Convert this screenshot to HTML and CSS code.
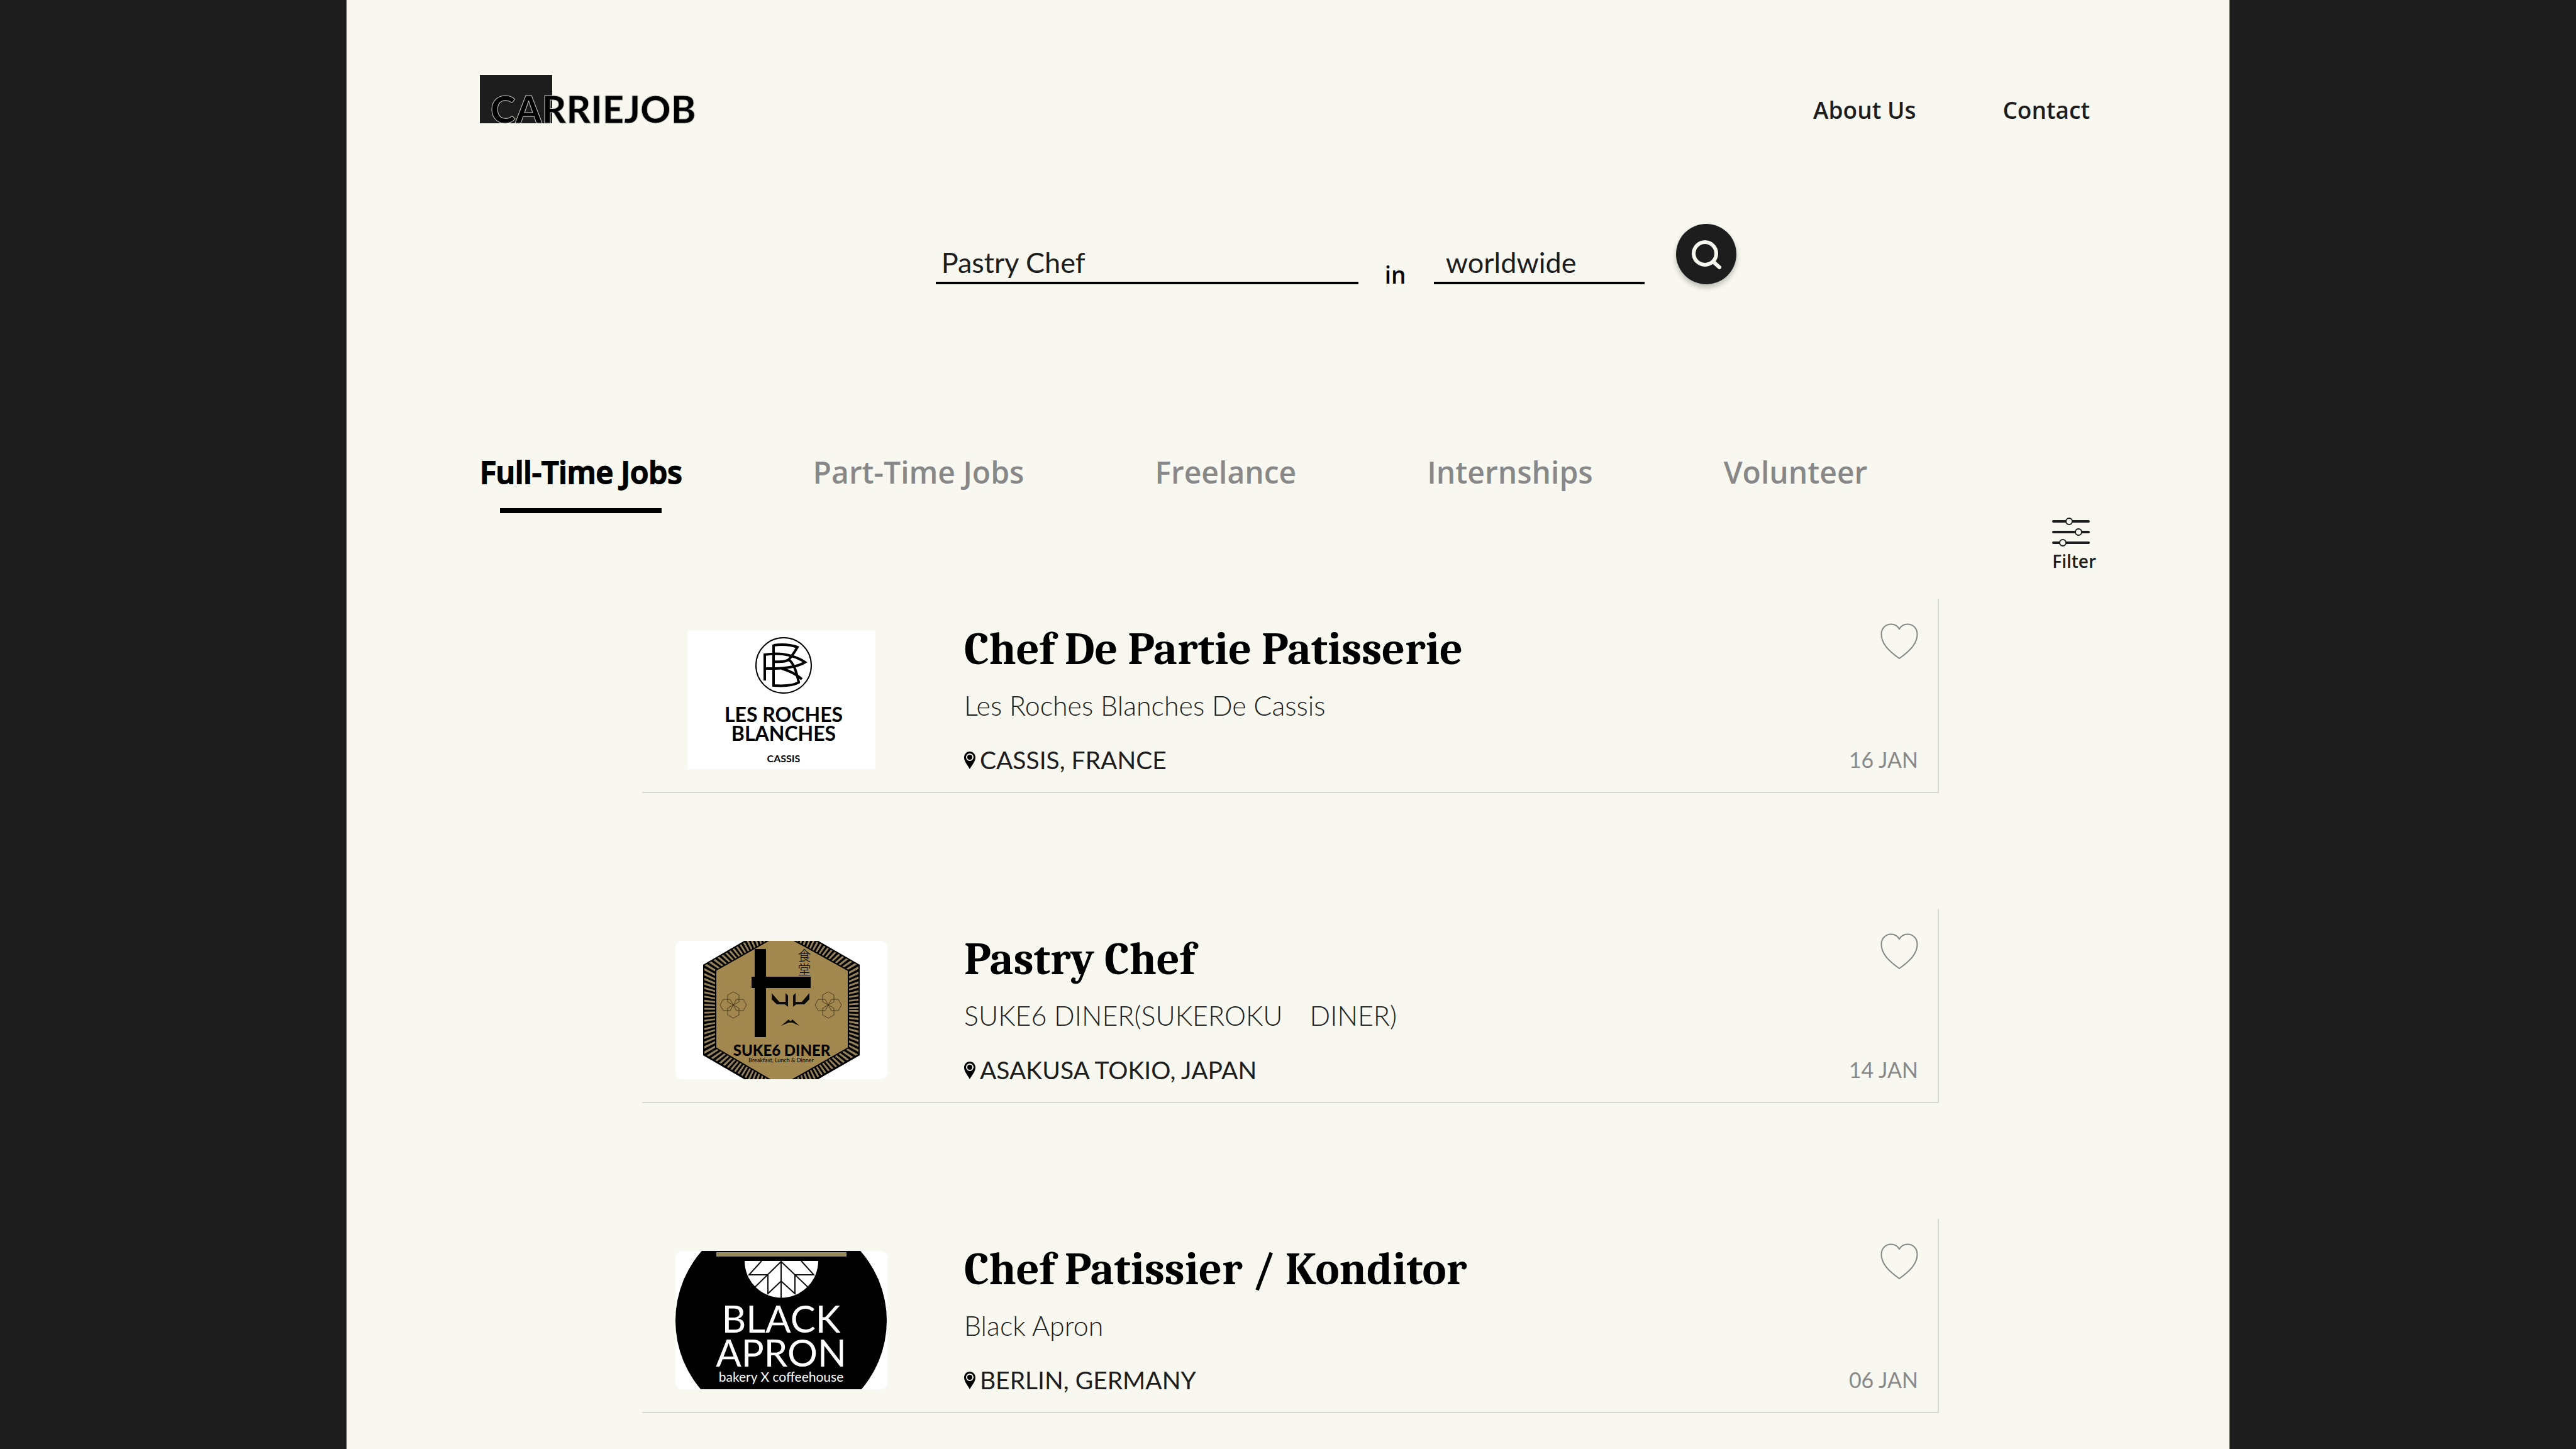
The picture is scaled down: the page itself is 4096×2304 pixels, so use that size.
FILE: index.html
```html
<!DOCTYPE html>
<html lang="en">
<head>
  <meta charset="UTF-8">
  <meta name="viewport" content="width=device-width, initial-scale=1">
  <title>Carriejob</title>
  <link rel="stylesheet" href="styles.css">
</head>
<body>
<!-- shared icons -->
<svg class="sprite" aria-hidden="true">
  <symbol id="heart" viewBox="0 0 60 58">
    <path d="M30 9C27 4 22 1.500 17 1.500C8 1.500 1.500 8 1.500 17.500C1.500 32 12 43 30 56C48 43 58.500 32 58.500 17.500C58.500 8 52 1.500 43 1.500C38 1.500 33 4 30 9Z" fill="none" stroke="#888" stroke-width="2"/>
  </symbol>
  <symbol id="pin" viewBox="0 0 18 32">
    <path d="M9 3C4 3 0 7 0 12.500C0 19 6 25 9 31C12 25 18 19 18 12.500C18 7 14 3 9 3Z"/>
    <circle cx="9" cy="12" r="5" fill="none" stroke="#f8f8f0" stroke-width="2"/>
  </symbol>
  <symbol id="flower" viewBox="-22 -22 44 44">
    <path d="M0 0L9 -5V-16L0 -21L-9 -16V-5ZM0 0L9 5V16L0 21L-9 16V5ZM0 0L5 -9H16L21 0L16 9H5ZM0 0L-5 -9H-16L-21 0L-16 9H-5Z" fill="none" stroke="#2a2013" stroke-width="0.700"/>
  </symbol>
</svg>

<div class="page">
  <header class="header">
    <a class="logo" href="#">CARRIEJOB</a>
    <nav class="nav">
      <a href="#">About Us</a>
      <a href="#">Contact</a>
    </nav>
  </header>

  <main>
    <form class="search">
      <input class="field job" type="text" value="Pastry Chef" aria-label="Job">
      <label class="in" for="place">in</label>
      <input class="field place" id="place" type="text" value="worldwide">
      <button class="search-btn" type="button" aria-label="Search">
        <svg viewBox="0 0 96 96">
          <circle cx="46" cy="47" r="18" fill="none" stroke="#f8f8f0" stroke-width="6"/>
          <path d="M59 60L69 69" stroke="#f8f8f0" stroke-width="6" stroke-linecap="round"/>
        </svg>
      </button>
    </form>

    <div class="tabs">
      <button type="button" class="tab current">Full-Time Jobs</button>
      <button type="button" class="tab">Part-Time Jobs</button>
      <button type="button" class="tab">Freelance</button>
      <button type="button" class="tab">Internships</button>
      <button type="button" class="tab">Volunteer</button>
    </div>

    <button class="filter" type="button">
      <svg viewBox="0 0 60 48">
        <path d="M2 7H58M2 24H58M2 41H58" stroke="#1d1d1d" stroke-width="4" stroke-linecap="round"/>
        <g fill="#f8f8f0" stroke="#1d1d1d" stroke-width="2">
          <circle cx="27" cy="7" r="5"/>
          <circle cx="42" cy="24" r="5"/>
          <circle cx="17" cy="41" r="5"/>
        </g>
      </svg>
      Filter
    </button>

    <ul class="jobs">
      <li class="card">
        <div class="brand">
          <svg class="square" viewBox="0 0 299 220">
            <rect width="299" height="220" fill="#fff"/>
            <g fill="none" stroke="#000">
              <circle cx="153" cy="55" r="44" stroke-width="2"/>
              <path d="M137 22V87Q165 89 177 82Q171 52 161 46Q168 38 175 26Q158 20 137 23M138 49Q155 50 161 46" stroke-width="4"/>
              <path d="M123 79V38Q160 32 187 50Q170 61 123 60M150 60Q170 66 182 77" stroke-width="4"/>
            </g>
            <g class="deco">
              <text x="153" y="145" font-size="32">LES ROCHES</text>
              <text x="153" y="175" font-size="32">BLANCHES</text>
              <text x="153" y="209" font-size="16">CASSIS</text>
            </g>
          </svg>
        </div>
        <div class="info">
          <h2>Chef De Partie Patisserie</h2>
          <p class="company">Les Roches Blanches De Cassis</p>
          <p class="location"><svg><use href="#pin"/></svg>CASSIS, FRANCE</p>
        </div>
        <div class="side">
          <button class="like" type="button" aria-label="Save job"><svg><use href="#heart"/></svg></button>
          <time>16 JAN</time>
        </div>
      </li>

      <li class="card">
        <div class="brand">
          <svg viewBox="0 0 337 220">
            <clipPath id="ring"><path d="M168 -31L291 39V180L168 250L46 180V39Z"/></clipPath>
            <rect width="337" height="220" fill="#fff"/>
            <path d="M168 -34L293 38V182L168 254L44 182V38Z"/>
            <!-- rays of the border -->
            <circle cx="168" cy="110" r="100" fill="none" stroke="#95825c" stroke-width="200" stroke-dasharray="2.500 2.736" clip-path="url(#ring)"/>
            <path d="M168 -12L275 47V170L168 231L64 170V47Z" fill="#a2884e" stroke="#000" stroke-width="2"/>
            <path d="M126 13H144V57H215V75H144V153H126V75H121V57H126Z"/>
            <path d="M153 83L165 97H175V83L179 87V105L174 101H161L153 93ZM213 83L201 97H191V83L187 87V105L192 101H205L213 93ZM168 135L180 125L183 128L186 125L197 135L186 130H180Z" fill="#0b0a07"/>
            <use href="#flower" x="70" y="80" width="44" height="44"/>
            <use href="#flower" x="221" y="80" width="44" height="44"/>
            <text class="kanji" x="205" y="31">食</text>
            <text class="kanji" x="205" y="53">堂</text>
            <text class="diner" x="169" y="183">SUKE6 DINER</text>
            <text class="meals" x="168" y="193">Breakfast, Lunch &amp; Dinner</text>
          </svg>
        </div>
        <div class="info">
          <h2>Pastry Chef</h2>
          <p class="company">SUKE6 DINER(SUKEROKU　DINER)</p>
          <p class="location"><svg><use href="#pin"/></svg>ASAKUSA TOKIO, JAPAN</p>
        </div>
        <div class="side">
          <button class="like" type="button" aria-label="Save job"><svg><use href="#heart"/></svg></button>
          <time>14 JAN</time>
        </div>
      </li>

      <li class="card">
        <div class="brand">
          <svg viewBox="0 0 337 220">
            <rect width="337" height="220" fill="#fff"/>
            <circle cx="168" cy="111" r="168"/>
            <rect x="65" y="2" width="207" height="7" fill="#988b5b"/>
            <path d="M110 16H227A58 58 0 0 1 110 16Z" fill="#fff"/>
            <path d="M168 16V75M137 16L117 38H147V68M168 17L126 58M168 48L146 69M200 16L220 38H190V68M168 17L211 58M168 48L191 69" fill="none" stroke="#111" stroke-width="2"/>
            <g class="apron">
              <text x="168" y="130" font-size="60">BLACK</text>
              <text x="168" y="184" font-size="60">APRON</text>
              <text x="168" y="208" font-size="21">bakery X coffeehouse</text>
            </g>
          </svg>
        </div>
        <div class="info">
          <h2>Chef Patissier / Konditor</h2>
          <p class="company">Black Apron</p>
          <p class="location"><svg><use href="#pin"/></svg>BERLIN, GERMANY</p>
        </div>
        <div class="side">
          <button class="like" type="button" aria-label="Save job"><svg><use href="#heart"/></svg></button>
          <time>06 JAN</time>
        </div>
      </li>
    </ul>
  </main>
</div>
</body>
</html>
```
FILE: styles.css
```css
* {
  padding: 0;
  margin: 0;
  box-sizing: border-box;
}

body {
  background: #1d1d1d;
  color: #1d1d1d;
  font-family: Lato, "Noto Sans CJK JP", sans-serif;
}

a {
  color: inherit;
  text-decoration: none;
}

button {
  border: 0;
  background: none;
  color: inherit;
  font-family: inherit;
  cursor: pointer;
}

ul {
  list-style: none;
}

svg {
  display: block;
}

.sprite {
  position: absolute;
  width: 0;
  height: 0;
}

.page {
  width: 73.1%;
  min-height: 100vh;
  margin: 0 auto;
  padding: 119px 212px 0;
  background: #f8f8f0;
}

/* header */
.header {
  display: flex;
  justify-content: space-between;
  align-items: flex-start;
}

.logo {
  height: 77px;
  padding: 32px 0 0 17px;
  background: linear-gradient(#1d1d1d, #1d1d1d) no-repeat left top / 115px 77px;
  color: #000;
  font-size: 60px;
  font-weight: 900;
  line-height: 44px;
  -webkit-text-stroke: 1px #c9c9c0;
}

.nav {
  display: flex;
  gap: 138px;
  padding: 31px 10px 0 0;
  font: 600 37px/50px "Open Sans", sans-serif;
}

/* search */
.search {
  display: flex;
  align-items: flex-end;
  gap: 42px;
  margin: 156px 0 0 28.2%;
}

.field {
  height: 65px;
  padding: 0 0 1px 9px;
  border: 0;
  border-bottom: 4px solid #000;
  border-radius: 0;
  outline: none;
  background: none;
  color: inherit;
  font-family: inherit;
  font-size: 45px;
}

.job {
  width: 672px;
}

.place {
  width: 335px;
  padding-left: 19px;
}

.in {
  min-width: 36px;
  color: #000;
  font: 600 37px/30px "Open Sans", sans-serif;
}

.search-btn {
  width: 96px;
  height: 96px;
  margin-left: 8px;
  border-radius: 50%;
  background: #1d1d1d;
  box-shadow: 0 5px 8px rgba(0, 0, 0, 0.25);
}

/* tabs */
.tabs {
  display: flex;
  align-items: flex-start;
  gap: 208px;
  margin-top: 266px;
}

.tab {
  color: #888;
  font: 600 48px/66px "Open Sans", sans-serif;
}

.tab.current {
  color: #000;
  -webkit-text-stroke: 2px #000;
}

.tab.current::after {
  content: "";
  display: block;
  width: 80%;
  height: 8px;
  margin: 24px auto 0;
  background: #000;
}

.filter {
  display: flex;
  flex-direction: column;
  align-items: flex-start;
  gap: 8px;
  margin: 6px 0 0 auto;
  font: 600 28px/28px "Open Sans", sans-serif;
}

.filter svg {
  width: 60px;
  height: 48px;
}

/* job list */
.jobs {
  display: grid;
  gap: 184px;
  margin: 46px 250px 0 258px;
}

.card {
  display: grid;
  grid-template-columns: 337px 1fr auto;
  column-gap: 122px;
  padding: 39px 31px 28px 53px;
  border: solid #d8d8d2;
  border-width: 0 2px 2px 0;
}

.brand,
.info {
  padding-top: 12px;
}

.brand svg {
  width: 337px;
  height: 220px;
  border-radius: 11px;
}

.brand .square {
  width: 299px;
  margin: 0 auto;
  border-radius: 0;
}

.brand text {
  text-anchor: middle;
}

.deco {
  font-weight: 700;
}

.kanji {
  font: 300 21px "Noto Sans CJK JP", sans-serif;
}

.diner {
  font-size: 24px;
  font-weight: 900;
}

.meals {
  font-size: 9px;
}

.apron {
  fill: #fff;
}

.info h2 {
  color: #000;
  font: 700 72px/60px Cambria, Caladea, "Liberation Serif", serif;
}

.company {
  margin-top: 33px;
  font-size: 43px;
  font-weight: 300;
  line-height: 52px;
}

.location {
  display: flex;
  align-items: center;
  gap: 7px;
  margin-top: 37px;
  font-size: 39px;
  line-height: 46px;
}

.location svg {
  width: 18px;
  height: 32px;
}

.side {
  display: flex;
  flex-direction: column;
  justify-content: space-between;
  align-items: flex-end;
  color: #888;
  font-size: 34px;
  line-height: 46px;
}

.like svg {
  width: 60px;
  height: 58px;
}
```
